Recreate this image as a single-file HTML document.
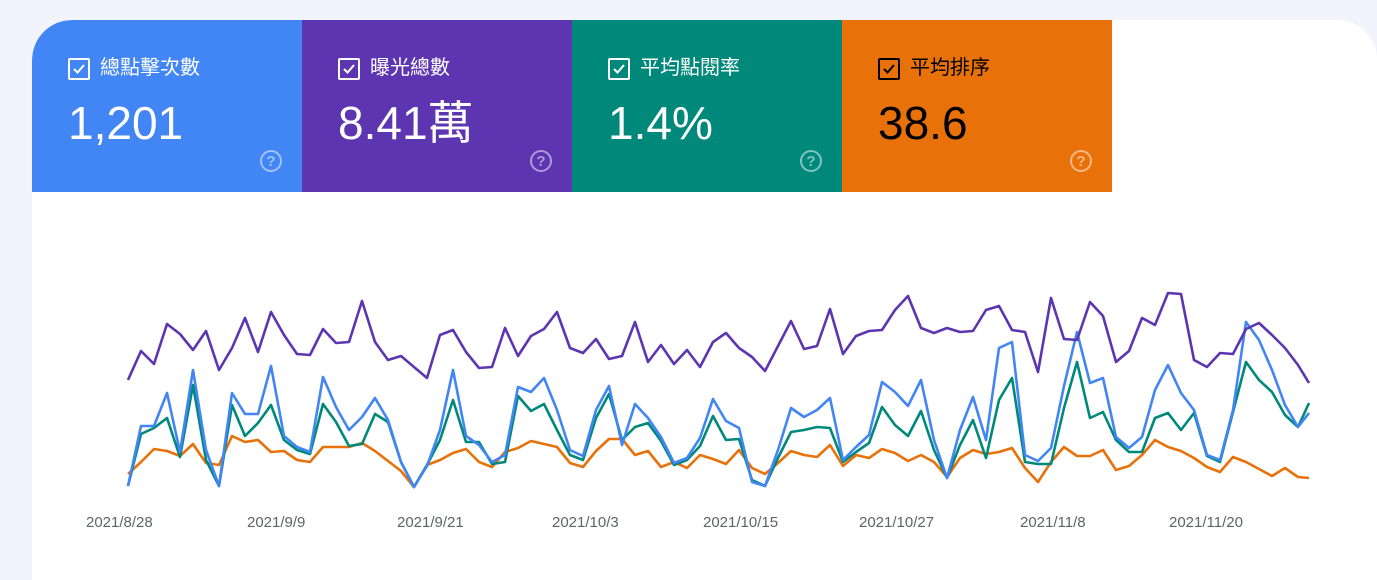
<!DOCTYPE html>
<html><head><meta charset="utf-8"><style>
body{margin:0;width:1377px;height:539px;background:#f1f4fc;overflow:hidden;font-family:"Liberation Sans","Noto Sans CJK TC",sans-serif;position:relative}
.card{position:absolute;left:32px;top:20px;width:1345px;height:560px;background:#fff;border-radius:40px 40px 0 0;overflow:hidden}
.tile{position:absolute;top:0;width:270px;height:172px;color:#fff}
.cb{position:absolute;left:36px;top:38px;width:18px;height:18px;border:2px solid currentColor;border-radius:2px}
.cb svg{position:absolute;left:1px;top:1px}
.lab{position:absolute;left:68px;top:36px;font-size:20px;line-height:24px}
.val{position:absolute;left:36px;top:76px;font-size:46px;line-height:54px}
.help{position:absolute;left:228px;top:130px;width:18px;height:18px;border:2px solid currentColor;border-radius:50%;opacity:.5;font-size:15px;font-weight:bold;text-align:center;line-height:19px}
.ax{position:absolute;top:514px;font-size:15px;color:#5f6368}
</style></head><body>
<div class="card">
<div class="tile" style="left:0;background:#4285f4;border-top-left-radius:40px"><div class="cb"><svg width="16" height="16"><path d="M3 8l3.5 3.5L13 4" stroke="#fff" stroke-width="2" fill="none"/></svg></div><div class="lab">總點擊次數</div><div class="val">1,201</div><div class="help">?</div></div>
<div class="tile" style="left:270px;background:#5e35b1"><div class="cb"><svg width="16" height="16"><path d="M3 8l3.5 3.5L13 4" stroke="#fff" stroke-width="2" fill="none"/></svg></div><div class="lab">曝光總數</div><div class="val">8.41萬</div><div class="help">?</div></div>
<div class="tile" style="left:540px;background:#00897b"><div class="cb"><svg width="16" height="16"><path d="M3 8l3.5 3.5L13 4" stroke="#fff" stroke-width="2" fill="none"/></svg></div><div class="lab">平均點閱率</div><div class="val">1.4%</div><div class="help">?</div></div>
<div class="tile" style="left:810px;background:#e8710a;color:#000"><div class="cb"><svg width="16" height="16"><path d="M3 8l3.5 3.5L13 4" stroke="#000" stroke-width="2" fill="none"/></svg></div><div class="lab">平均排序</div><div class="val">38.6</div><div class="help" style="color:#fff">?</div></div>
</div>
<svg style="position:absolute;left:0;top:0" width="1377" height="539" fill="none" stroke-width="2.6" stroke-linejoin="round">
<polyline stroke="#e8710a" points="128,474 141,462 154,449 167,451 180,456 193,444 206,463 219,465 232,436 245,442 258,440 271,452 284,451 297,460 310,462 323,447 336,447 349,447 362,443 375,451 388,461 401,471 414,487 427,465 440,460 453,453 466,449 479,462 492,467 505,452 518,448 531,441 544,444 557,447 570,463 583,467 596,451 609,439 622,439 635,455 648,451 661,467 674,462 687,468 700,455 713,459 726,464 739,450 752,468 765,474 778,463 791,451 804,455 817,457 830,445 843,466 856,455 869,458 882,449 895,453 908,461 921,455 934,462 947,477 960,458 973,450 986,454 999,452 1012,448 1025,468 1038,482 1051,462 1064,447 1077,456 1090,456 1103,450 1116,470 1129,466 1142,455 1155,440 1168,447 1181,451 1194,458 1207,467 1220,472 1233,457 1246,462 1259,469 1272,476 1285,468 1298,477 1309,478"/>
<polyline stroke="#00897b" points="128,486 141,434 154,428 167,418 180,457 193,385 206,460 219,486 232,405 245,436 258,423 271,405 284,440 297,450 310,454 323,404 336,422 349,446 362,444 375,414 388,422 401,462 414,487 427,465 440,440 453,400 466,442 479,442 492,464 505,462 518,396 531,411 544,404 557,430 570,455 583,460 596,418 609,394 622,440 635,427 648,423 661,441 674,465 687,460 700,446 713,416 726,440 739,439 752,480 765,486 778,458 791,432 804,430 817,427 830,428 843,462 856,452 869,443 882,407 895,425 908,436 921,411 934,450 947,478 960,445 973,420 986,458 999,400 1012,378 1025,462 1038,464 1051,464 1064,408 1077,362 1090,418 1103,412 1116,440 1129,452 1142,452 1155,418 1168,413 1181,430 1194,413 1207,456 1220,462 1233,412 1246,362 1259,380 1272,392 1285,415 1298,427 1309,403"/>
<polyline stroke="#4285f4" points="128,486 141,426 154,426 167,393 180,452 193,370 206,450 219,486 232,393 245,414 258,414 271,366 284,436 297,447 310,452 323,377 336,407 349,430 362,417 375,398 388,420 401,462 414,487 427,466 440,430 453,370 466,436 479,445 492,462 505,455 518,387 531,392 544,378 557,410 570,450 583,456 596,410 609,386 622,445 635,404 648,418 661,437 674,463 687,458 700,438 713,399 726,421 739,428 752,482 765,486 778,450 791,408 804,417 817,410 830,398 843,460 856,447 869,435 882,382 895,392 908,406 921,380 934,440 947,478 960,430 973,397 986,440 999,348 1012,342 1025,455 1038,461 1051,448 1064,386 1077,332 1090,383 1103,378 1116,437 1129,448 1142,437 1155,390 1168,365 1181,393 1194,410 1207,455 1220,460 1233,410 1246,322 1259,340 1272,370 1285,405 1298,427 1309,413"/>
<polyline stroke="#5e35b1" points="128,380 141,351 154,364 167,324 180,334 193,350 206,331 219,370 232,348 245,318 258,352 271,312 284,335 297,354 310,355 323,329 336,343 349,342 362,301 375,342 388,360 401,356 414,367 427,378 440,335 453,330 466,352 479,368 492,367 505,328 518,356 531,336 544,329 557,312 570,348 583,353 596,339 609,359 622,356 635,322 648,362 661,345 674,364 687,350 700,367 713,342 726,333 739,348 752,357 765,371 778,346 791,321 804,349 817,346 830,309 843,354 856,336 869,331 882,330 895,310 908,296 921,328 934,333 947,328 960,332 973,331 986,310 999,306 1012,330 1025,332 1038,372 1051,298 1064,339 1077,340 1090,302 1103,316 1116,362 1129,351 1142,318 1155,325 1168,293 1181,294 1194,360 1207,367 1220,353 1233,354 1246,329 1259,323 1272,335 1285,348 1298,365 1309,383"/>
</svg>
<div class="ax" style="left:86px">2021/8/28</div>
<div class="ax" style="left:247px">2021/9/9</div>
<div class="ax" style="left:397px">2021/9/21</div>
<div class="ax" style="left:552px">2021/10/3</div>
<div class="ax" style="left:703px">2021/10/15</div>
<div class="ax" style="left:859px">2021/10/27</div>
<div class="ax" style="left:1020px">2021/11/8</div>
<div class="ax" style="left:1169px">2021/11/20</div>
</body></html>
